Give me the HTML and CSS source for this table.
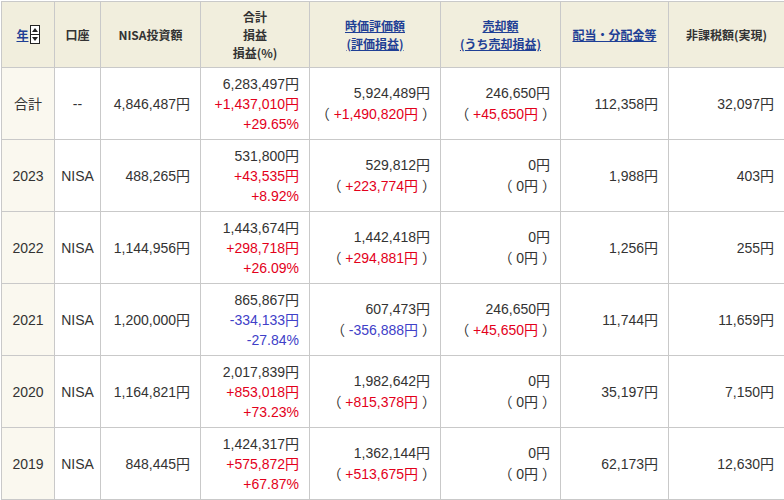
FILE: index.html
```html
<!DOCTYPE html>
<html lang="ja">
<head>
<meta charset="utf-8">
<link rel="stylesheet" href="styles.css">
</head>
<body>
<div class="wrap">
<table class="tbl">
  <colgroup>
    <col class="c1"><col class="c2"><col class="c3"><col class="c4"><col class="c5"><col class="c6"><col class="c7"><col class="c8">
  </colgroup>
  <thead>
    <tr>
      <th><span class="yr"><a href="#">年</a><svg class="sort" width="10" height="19" viewBox="0 0 10 19"><rect x="0.5" y="0.5" width="9" height="18" fill="#fff" stroke="#222"/><line x1="0.5" y1="9.5" x2="9.5" y2="9.5" stroke="#222"/><path d="M2 7 L5 3 L8 7 Z" fill="#222"/><path d="M2 12 L8 12 L5 16 Z" fill="#222"/></svg></span></th>
      <th>口座</th>
      <th>NISA投資額</th>
      <th>合計<br>損益<br>損益(%)</th>
      <th><a href="#">時価評価額<br>(評価損益)</a></th>
      <th><a href="#">売却額<br>(うち売却損益)</a></th>
      <th><a href="#">配当・分配金等</a></th>
      <th>非課税額(実現)</th>
    </tr>
  </thead>
  <tbody>
    <tr>
      <td class="year">合計</td>
      <td class="ctr">--</td>
      <td class="num">4,846,487円</td>
      <td class="num">6,283,497円<br><span class="pos">+1,437,010円</span><br><span class="pos">+29.65%</span></td>
      <td class="num">5,924,489円<br><span class="lp">（</span> <span class="pos">+1,490,820円</span> <span class="rp">）</span></td>
      <td class="num">246,650円<br><span class="lp">（</span> <span class="pos">+45,650円</span> <span class="rp">）</span></td>
      <td class="num">112,358円</td>
      <td class="num">32,097円</td>
    </tr>
    <tr>
      <td class="year">2023</td>
      <td class="ctr">NISA</td>
      <td class="num">488,265円</td>
      <td class="num">531,800円<br><span class="pos">+43,535円</span><br><span class="pos">+8.92%</span></td>
      <td class="num">529,812円<br><span class="lp">（</span> <span class="pos">+223,774円</span> <span class="rp">）</span></td>
      <td class="num">0円<br><span class="lp">（</span> 0円 <span class="rp">）</span></td>
      <td class="num">1,988円</td>
      <td class="num">403円</td>
    </tr>
    <tr>
      <td class="year">2022</td>
      <td class="ctr">NISA</td>
      <td class="num">1,144,956円</td>
      <td class="num">1,443,674円<br><span class="pos">+298,718円</span><br><span class="pos">+26.09%</span></td>
      <td class="num">1,442,418円<br><span class="lp">（</span> <span class="pos">+294,881円</span> <span class="rp">）</span></td>
      <td class="num">0円<br><span class="lp">（</span> 0円 <span class="rp">）</span></td>
      <td class="num">1,256円</td>
      <td class="num">255円</td>
    </tr>
    <tr>
      <td class="year">2021</td>
      <td class="ctr">NISA</td>
      <td class="num">1,200,000円</td>
      <td class="num">865,867円<br><span class="neg">-334,133円</span><br><span class="neg">-27.84%</span></td>
      <td class="num">607,473円<br><span class="lp">（</span> <span class="neg">-356,888円</span> <span class="rp">）</span></td>
      <td class="num">246,650円<br><span class="lp">（</span> <span class="pos">+45,650円</span> <span class="rp">）</span></td>
      <td class="num">11,744円</td>
      <td class="num">11,659円</td>
    </tr>
    <tr>
      <td class="year">2020</td>
      <td class="ctr">NISA</td>
      <td class="num">1,164,821円</td>
      <td class="num">2,017,839円<br><span class="pos">+853,018円</span><br><span class="pos">+73.23%</span></td>
      <td class="num">1,982,642円<br><span class="lp">（</span> <span class="pos">+815,378円</span> <span class="rp">）</span></td>
      <td class="num">0円<br><span class="lp">（</span> 0円 <span class="rp">）</span></td>
      <td class="num">35,197円</td>
      <td class="num">7,150円</td>
    </tr>
    <tr>
      <td class="year">2019</td>
      <td class="ctr">NISA</td>
      <td class="num">848,445円</td>
      <td class="num">1,424,317円<br><span class="pos">+575,872円</span><br><span class="pos">+67.87%</span></td>
      <td class="num">1,362,144円<br><span class="lp">（</span> <span class="pos">+513,675円</span> <span class="rp">）</span></td>
      <td class="num">0円<br><span class="lp">（</span> 0円 <span class="rp">）</span></td>
      <td class="num">62,173円</td>
      <td class="num">12,630円</td>
    </tr>
  </tbody>
</table>
</div>
</body>
</html>
```
FILE: styles.css
```css
html, body {
  margin: 0;
  padding: 0;
  background: #fff;
}
.wrap {
  padding: 1px 0 0 1px;
}
.tbl {
  border-collapse: collapse;
  table-layout: fixed;
  width: 783px;
  font-family: "Liberation Sans", Arial, "Noto Sans CJK JP", sans-serif;
  font-size: 14px;
  color: #333;
}
.c1 { width: 53px; }
.c2 { width: 46px; }
.c3 { width: 100px; }
.c4 { width: 109px; }
.c5 { width: 131px; }
.c6 { width: 120px; }
.c7 { width: 108px; }
.c8 { width: 116px; }
.tbl th, .tbl td {
  border: 1px solid #c9c9c9;
  padding: 0 10px;
}
.tbl th {
  background: #f1eedd;
  font-family: "Noto Sans CJK JP", "Liberation Sans", sans-serif;
  font-size: 12px;
  font-weight: bold;
  line-height: 18px;
  height: 65px;
  text-align: center;
  color: #333;
  padding: 0 2px;
}
.tbl th a {
  color: #1f3f95;
  text-decoration: underline;
}
.yr {
  display: inline-flex;
  align-items: center;
  gap: 1px;
}
.sort {
  display: block;
}
.tbl td {
  height: 71px;
  line-height: 20px;
  vertical-align: middle;
}
.tbl td.year {
  background: #faf8ef;
  text-align: center;
  padding: 0;
}
.tbl td.ctr {
  text-align: center;
  padding: 0;
}
.tbl td.num {
  text-align: right;
  white-space: nowrap;
}
.lp {
  font-family: "Noto Sans CJK JP", sans-serif;
  display: inline-block;
  margin-left: -7px;
}
.rp {
  font-family: "Noto Sans CJK JP", sans-serif;
  display: inline-block;
  margin-right: -6px;
}
.pos { color: #e3001b; }
.neg { color: #4040c8; }
```
